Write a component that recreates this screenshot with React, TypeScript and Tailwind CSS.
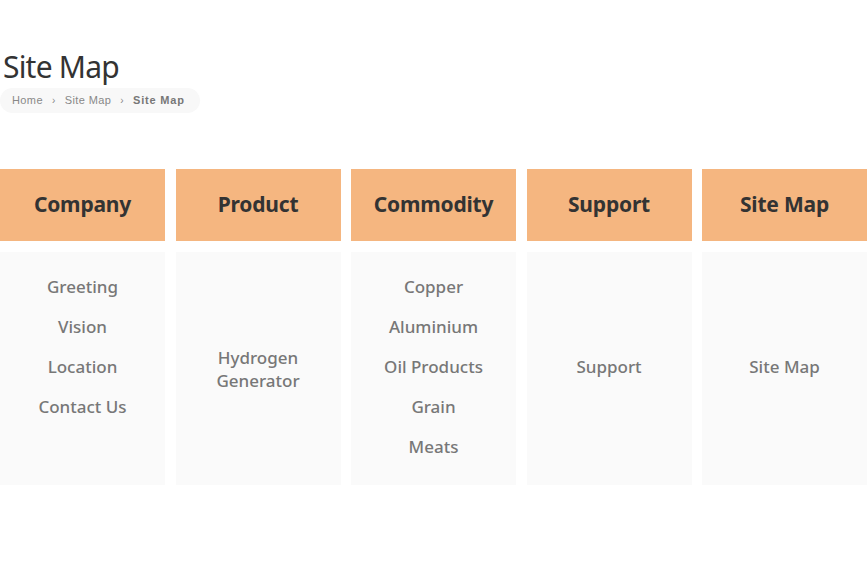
const columns = [
  { title: 'Company', items: ['Greeting', 'Vision', 'Location', 'Contact Us'], pad: 'pb-[44px]' },
  { title: 'Product', items: ['Hydrogen\nGenerator'], pad: 'pt-[1px]' },
  { title: 'Commodity', items: ['Copper', 'Aluminium', 'Oil Products', 'Grain', 'Meats'], pad: 'pb-[4px]' },
  { title: 'Support', items: ['Support'], pad: 'pb-[4px]' },
  { title: 'Site Map', items: ['Site Map'], pad: 'pb-[4px]' },
];

export default function App() {
  return (
    <div className="w-[867px] h-[569px] bg-white overflow-hidden">
      <div className="pt-[45px]">
        <h1 className="pl-[3px] text-[30px] leading-[44px] text-[#333] font-['Noto_Sans',sans-serif] font-normal tracking-[-0.8px]">
          Site Map
        </h1>
        <div className="mt-[-1px] flex">
          <div className="flex items-center h-[25px] pl-[12px] pr-[15px] rounded-full bg-[#f8f8f8] text-[11px] tracking-[0.4px] text-[#888] font-['Liberation_Sans',Arial,sans-serif]">
            <span>Home</span>
            <span className="mx-[9px] text-[10px]">&#8250;</span>
            <span>Site Map</span>
            <span className="mx-[9px] text-[10px]">&#8250;</span>
            <span className="font-bold tracking-[0.8px] text-[#777]">Site Map</span>
          </div>
        </div>
      </div>

      <div className="mt-[56px] grid grid-cols-5 gap-x-[10.5px] gap-y-[10.5px]">
        {columns.map((col) => (
          <div key={col.title} className="h-[72px] bg-[#f5b680] flex items-center justify-center">
            <span className="text-[21px] font-bold text-[#333] font-['Noto_Sans',sans-serif] tracking-[-0.2px]">
              {col.title}
            </span>
          </div>
        ))}
        {columns.map((col) => (
          <div key={col.title + '-body'} className="h-[233px] bg-[#fafafa] flex flex-col items-center justify-center">
            <ul className={col.pad}>
              {col.items.map((item) => (
                <li
                  key={item}
                  className="min-h-[40px] flex items-center justify-center text-center whitespace-pre-line text-[17px] leading-[23px] text-[#777] font-['Noto_Sans',sans-serif] font-medium"
                >
                  {item}
                </li>
              ))}
            </ul>
          </div>
        ))}
      </div>
    </div>
  );
}
